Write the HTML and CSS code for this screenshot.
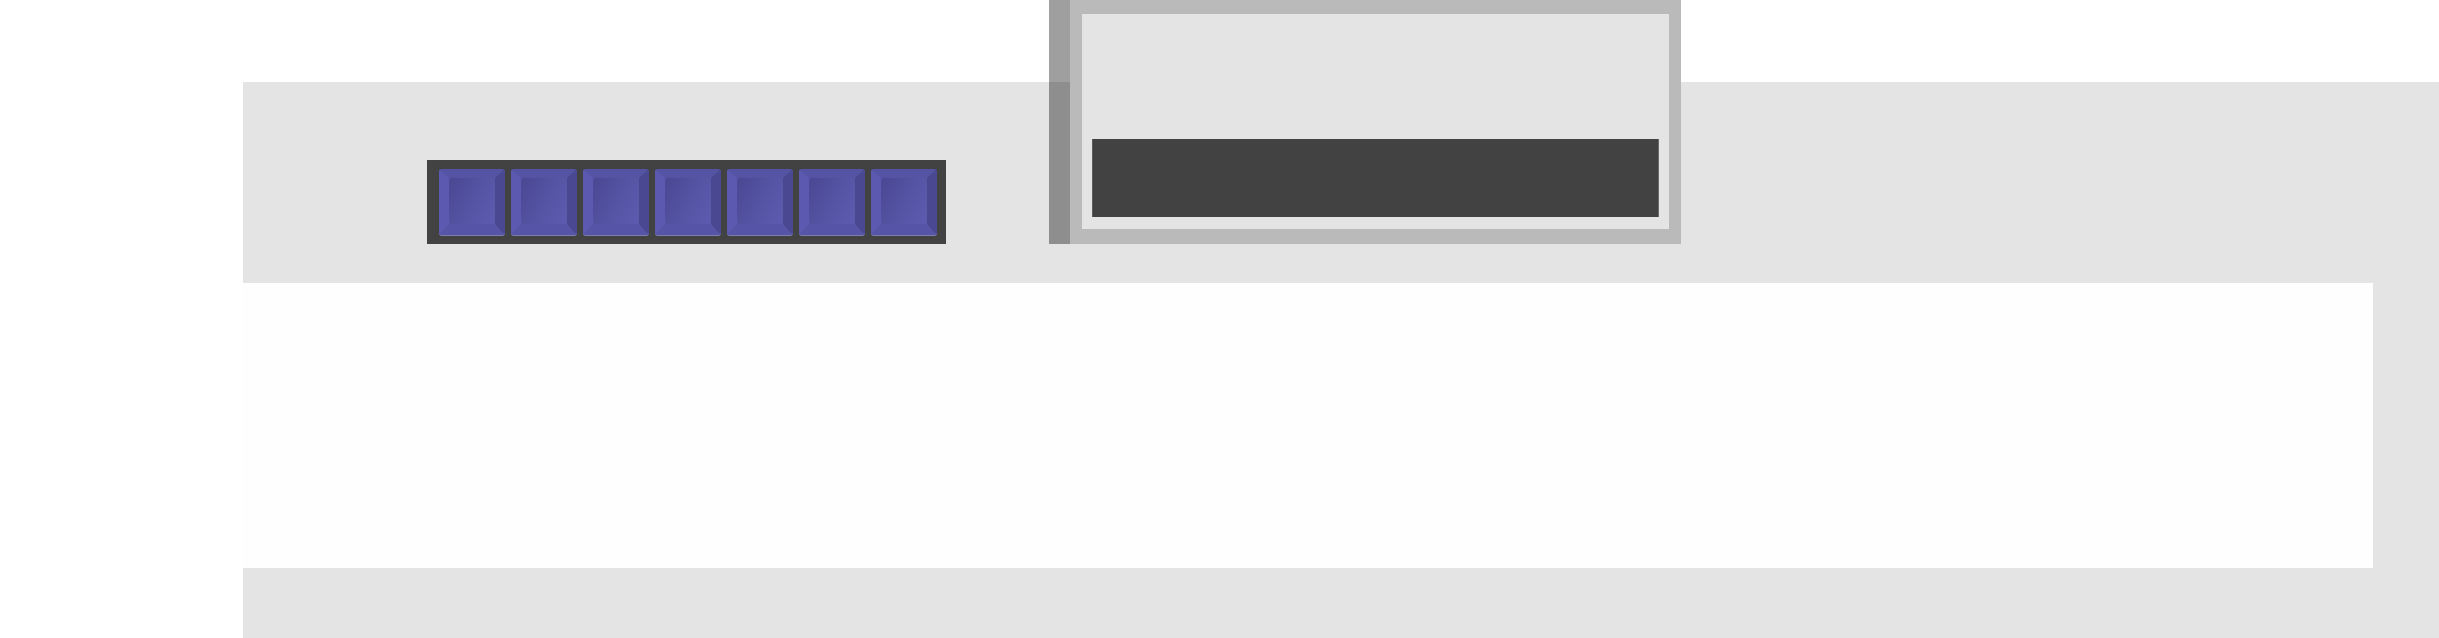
FILE: index.html
```html
<!DOCTYPE html>
<html>
<head>
<meta charset="utf-8">
<link rel="stylesheet" href="styles.css">
</head>
<body>
<div class="page">
  <div class="panel">
    <div class="panel-head">
      <div class="keybar">
        <div class="key"><div class="face"></div></div>
        <div class="key"><div class="face"></div></div>
        <div class="key"><div class="face"></div></div>
        <div class="key"><div class="face"></div></div>
        <div class="key"><div class="face"></div></div>
        <div class="key"><div class="face"></div></div>
        <div class="key"><div class="face"></div></div>
      </div>
    </div>
    <div class="content"></div>
  </div>
</div>
<div class="popup">
  <div class="popup-shade"></div>
  <div class="popup-box">
    <div class="popup-inner">
      <div class="popup-bar"></div>
    </div>
  </div>
</div>
</body>
</html>
```

FILE: styles.css
```css
html, body {
  margin: 0;
  padding: 0;
  background: #ffffff;
  overflow: hidden;
  font-family: "Liberation Sans", Arial, sans-serif;
}

.page {
  padding: 82px 0 0 243px;
  height: 638px;
  box-sizing: border-box;
}

.panel {
  background: #e4e4e4;
  height: 556px;
  display: flex;
  flex-direction: column;
}

.panel-head {
  height: 201px;
  box-sizing: border-box;
  padding: 78px 0 0 184px;
}

.keybar {
  display: flex;
  gap: 6px;
  width: 519px;
  height: 84px;
  box-sizing: border-box;
  padding: 9px 9px 9px 12px;
  background: #424242;
}

.key {
  width: 66px;
  height: 66px;
  box-sizing: border-box;
  border-style: solid;
  border-width: 9px 10px 11px 10px;
  border-color: #5553a4 #4a4891 #5654a7 #5c5ab0;
  border-radius: 3px;
  box-shadow: 0 1px 0 #7d7cab;
  background: #5856a8;
}

.face {
  width: 100%;
  height: 100%;
  border-radius: 3px;
  background: linear-gradient(118deg, #4a4893 0%, #5352a2 45%, #5c5baf 100%);
}

.content {
  width: 2130px;
  height: 285px;
  background: #fefefe;
}

.popup {
  position: absolute;
  left: 1049px;
  top: 0;
  height: 244px;
  display: flex;
}

.popup-shade {
  width: 21px;
  background: rgba(0, 0, 0, 0.376);
}

.popup-box {
  width: 611px;
  height: 244px;
  box-sizing: border-box;
  border-style: solid;
  border-color: #bababa;
  border-width: 14px 12px 15px 12px;
  background: #e4e4e4;
}

.popup-inner {
  height: 100%;
  box-sizing: border-box;
  padding: 0 10px 12px 10px;
  display: flex;
  flex-direction: column;
  justify-content: flex-end;
}

.popup-bar {
  height: 78px;
  background: #424242;
  border-left: 1px solid #5c5c5c;
  border-right: 1px solid #6a6a6a;
}
```
